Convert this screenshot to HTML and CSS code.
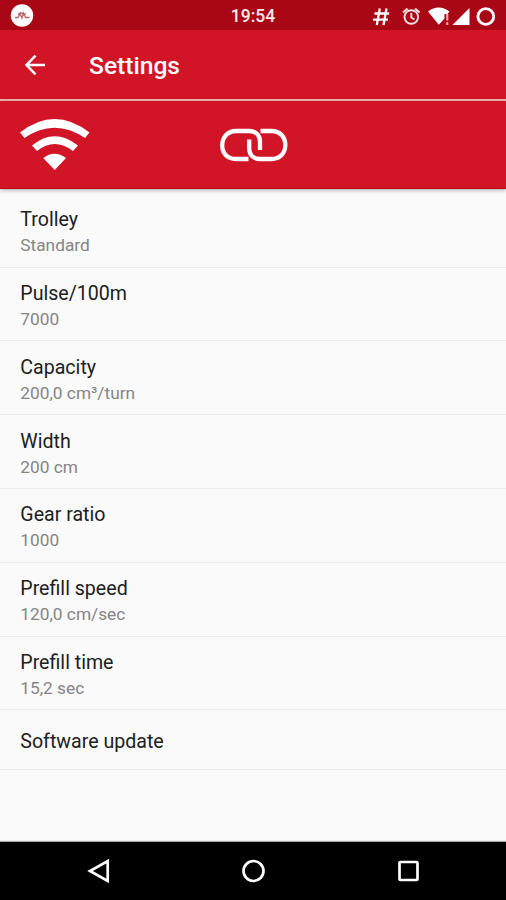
FILE: index.html
```html
<!DOCTYPE html>
<html lang="en">
<head>
<meta charset="utf-8">
<title>Settings</title>
<link rel="stylesheet" href="styles.css">
</head>
<body>
<div class="screen">
  <header class="status">
    <svg class="status-app" viewBox="0 0 24 24"><circle cx="12" cy="11.500" r="11.200" fill="#fff"/><path d="M5 13.500H8L10 9.500L12 14L13.500 9L15.500 13.500H19.500M8 10.500L11 8.500L14 11L16 9.500" fill="none" stroke="#b8606c" stroke-width="1.300"/></svg>
    <span class="clock">19:54</span>
    <svg class="status-icons" viewBox="370 0 136 30">
      <path d="M379.800 7.500L376.800 24M386.500 7.500L383.500 24M374.500 12.500H389.200M373 18.700H388" fill="none" stroke="#fff" stroke-width="2.300"/>
      <g fill="none" stroke="#f9dfe2" stroke-width="1.900"><circle cx="411.300" cy="16" r="6.800"/><path d="M411.300 12V16.500L414.500 18.500M403 11.500L407.500 7.500M415 7.500L419.600 11.500"/></g>
      <path d="M428 10.500Q438.500 2.500 449.500 10.500L447.500 13H444.500V17.500L438.800 23.800Z" fill="#fff"/>
      <path d="M447.300 13V19.500M447.300 21.300V24" stroke="#f3bfc5" stroke-width="2"/>
      <path d="M469.500 7V24H452.500Z" fill="#fff"/>
      <circle cx="485.800" cy="15.500" r="7.900" fill="none" stroke="#fff" stroke-width="2.900"/>
    </svg>
  </header>
  <div class="toolbar">
    <svg class="back" viewBox="0 0 24 24"><path d="M22 12H3.500M12.500 2.700L3.500 12l9 9.300" fill="none" stroke="#fff" stroke-width="2.500"/></svg>
    <h1 class="title">Settings</h1>
  </div>
  <div class="connections">
    <svg class="wifi" viewBox="20 118 70 53" fill="#fff">
      <path d="M20 132.500Q54.500 105.500 89.500 132.500L85 138Q54.500 117.500 24.500 138Z"/>
      <path d="M32 145.500Q54.500 127 78 145.500L73 151Q54.500 137 37 151Z"/>
      <path d="M43.200 158Q54.500 149.500 66 158L54.700 170Z"/>
    </svg>
    <svg class="link" viewBox="219 126 70 38" fill="none" stroke="#fff" stroke-width="4.300">
      <path d="M248.500 159H236C227.500 159 222.200 153.500 222.200 145.500S227.500 131 236 131H249.500C256 131 260 135.500 260 141.500V150"/>
      <path d="M260.500 131H271.500C280 131 285.300 137 285.300 145S280 159 271.500 159H260C253.500 159 249.200 155 249.200 148.500V139.500"/>
    </svg>
  </div>
  <main class="list">
    <div class="row"><div class="name">Trolley</div><div class="value">Standard</div></div>
    <div class="row"><div class="name">Pulse/100m</div><div class="value">7000</div></div>
    <div class="row"><div class="name">Capacity</div><div class="value">200,0 cm³/turn</div></div>
    <div class="row"><div class="name">Width</div><div class="value">200 cm</div></div>
    <div class="row"><div class="name">Gear ratio</div><div class="value">1000</div></div>
    <div class="row"><div class="name">Prefill speed</div><div class="value">120,0 cm/sec</div></div>
    <div class="row"><div class="name">Prefill time</div><div class="value">15,2 sec</div></div>
    <div class="row row-single"><div class="name">Software update</div></div>
  </main>
  <nav class="navbar">
    <svg viewBox="0 0 28 28"><path d="M23.700 4V24L6 14Z"/></svg>
    <svg viewBox="0 0 28 28"><circle cx="14.500" cy="14" r="10"/></svg>
    <svg viewBox="0 0 28 28"><rect x="5.500" y="5" width="18" height="18" rx="1"/></svg>
  </nav>
</div>
</body>
</html>
```
FILE: styles.css
```css
* { box-sizing: border-box; }
body { margin: 0; font-family: Roboto, sans-serif; }
svg { display: block; flex: none; }
.screen {
  width: 506px;
  height: 900px;
  display: flex;
  flex-direction: column;
  overflow: hidden;
  background: #fafafa;
}
.status {
  flex: none;
  height: 30px;
  display: grid;
  grid-template-columns: 136px 1fr 136px;
  align-items: center;
  background: #a90616;
  color: #fbe9eb;
}
.status-app { width: 24px; height: 24px; margin-left: 10px; }
.clock { text-align: center; font-size: 17.500px; font-weight: 500; line-height: 30px; padding-top: 1px; }
.status-icons { width: 136px; height: 30px; }
.toolbar {
  flex: none;
  height: 71px;
  display: flex;
  align-items: center;
  padding-left: 23px;
  background: #d21427;
  border-bottom: 2px solid #f5b8b0;
}
.back { width: 24px; height: 24px; }
.title { margin: 2px 0 0 42px; font-size: 24.600px; line-height: 30px; font-weight: 500; color: #fff; }
.connections {
  flex: none;
  height: 87.500px;
  display: flex;
  padding: 17px 0 0 20px;
  background: #d21427;
  border-bottom: 1px solid #bd0712;
  box-shadow: 0 1px 4px rgba(0, 0, 0, 0.350);
}
.wifi { width: 70px; height: 53px; }
.link { width: 70px; height: 38px; margin: 8px 0 0 129px; }
.list { flex: 1; padding-top: 5.300px; }
.row {
  height: 73.800px;
  padding: 12.500px 20px 0 20.300px;
  border-bottom: 1px solid #ededed;
}
.name { font-size: 19.600px; line-height: 27px; color: #202020; }
.value { font-size: 17.300px; line-height: 25px; color: #858585; }
.row-single { height: 59.500px; padding-top: 17.500px; }
.navbar {
  flex: none;
  height: 58px;
  display: flex;
  justify-content: center;
  align-items: center;
  gap: 126.800px;
  background: #000;
  box-shadow: 0 -1px 1px #aaa;
}
.navbar svg { width: 28px; height: 28px; fill: none; stroke: #fff; stroke-width: 2.700; }
```
